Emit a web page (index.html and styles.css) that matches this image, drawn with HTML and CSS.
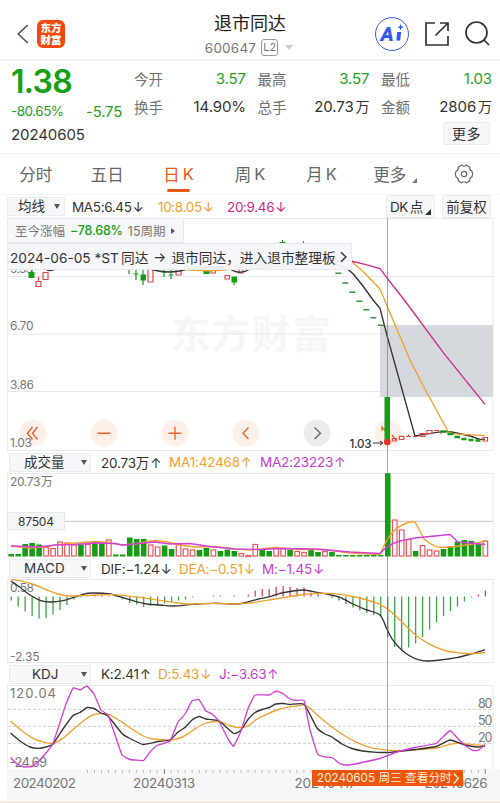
FILE: index.html
```
<!DOCTYPE html>
<html lang="zh-CN">
<head>
<meta charset="utf-8">
<title>退市同达 600647</title>
<link rel="stylesheet" href="styles.css">
</head>
<body>
<header class="topbar">
  <div class="topbar-left">
    <svg class="back" width="12" height="20" viewBox="0 0 12 20"><path d="M10.8 1L1.2 10l9.6 9"/></svg>
    <div class="logo"><span>东方</span><span>财富</span></div>
  </div>
  <div class="title">
    <h1>退市同达</h1>
    <div class="code"><span>600647</span><i class="level">L2</i><i class="caret"></i></div>
  </div>
  <div class="topbar-right">
    <div class="ai"><b>A</b><svg width="8" height="19" viewBox="0 0 8 19"><path d="M1.2 8h3.9l-.9 8.500H.3z"/><path d="M4.600 0l.9 2.3L7.800 3.200l-2.300.9L4.600 6.400l-.9-2.300-2.300-.9 2.300-.9z"/></svg></div>
    <svg class="line-icon" width="24" height="24" viewBox="0 0 24 24"><path d="M10 1H1v22h22v-9M10.500 13.500L22.500 1.500M15 1h8v8"/></svg>
    <svg class="line-icon" width="25" height="25" viewBox="0 0 25 25"><circle cx="11.500" cy="11.500" r="10.500"/><path d="M19 19l5 5"/></svg>
  </div>
</header>

<section class="quote">
  <div class="last">
    <div class="price">1.38</div>
    <div class="change"><span class="pct">-80.65%</span><span class="diff">-5.75</span></div>
    <div class="date">20240605</div>
  </div>
  <dl class="stats">
    <div><dt>今开</dt><dd class="down">3.57</dd></div>
    <div><dt>最高</dt><dd class="down">3.57</dd></div>
    <div><dt>最低</dt><dd class="down">1.03</dd></div>
    <div><dt>换手</dt><dd>14.90%</dd></div>
    <div><dt>总手</dt><dd>20.73<span class="unit">万</span></dd></div>
    <div><dt>金额</dt><dd>2806<span class="unit">万</span></dd></div>
    <button class="more">更多</button>
  </dl>
</section>

<nav class="tabs">
  <a>分时</a><a>五日</a><a class="active">日<span class="k">K</span></a><a>周<span class="k">K</span></a><a>月<span class="k">K</span></a><a class="has-corner">更多<i class="corner"></i></a>
  <a><svg class="gear" width="20" height="20" viewBox="0 0 20 20"><path d="M7.600 1.300Q10 3.200 12.400 1.300L15.600 3.100Q15.300 6.100 18 7.300Q19.300 10 18 12.700Q15.300 13.900 15.600 16.900L12.400 18.700Q10 16.800 7.600 18.700L4.400 16.900Q4.700 13.900 2 12.700Q.7 10 2 7.300Q4.700 6.100 4.400 3.100Z"/><circle cx="10" cy="10" r="2.700"/></svg></a>
</nav>

<main class="charts">
  <div class="legend legend-price">
    <button class="select">均线<i></i></button>
    <span class="c-dark">MA5:6.45<em>↓</em></span><span class="c-orange">10:8.05<em>↓</em></span><span class="c-pink">20:9.46<em>↓</em></span>
    <button class="dk">DK<span>点</span><i></i></button>
    <button class="adj">前复权</button>
  </div>
  <div class="panel">
    <svg class="plot" width="500" height="233" viewBox="0 218 500 233">
      <text class="watermark" x="171" y="348" textLength="160">东方财富</text>
      <path class="grid" d="M7.500 218V450.500H493V218.500H7.500M7.500 276.500H493M7.500 334H493M7.500 391.500H493"/>
      <rect class="gap" x="380" y="325" width="113" height="72"/>
      <g class="axis"><text x="10" y="273" textLength="23">9.53</text><text x="10" y="330" textLength="23.500">6.70</text><text x="10" y="388.500" textLength="24">3.86</text></g>
      <g class="controls">
        <circle cx="33" cy="433" r="13.500"/><circle cx="104" cy="433" r="13.500"/><circle cx="175" cy="433" r="13.500"/><circle cx="246" cy="433" r="13.500"/><circle class="off" cx="317" cy="433" r="13.500"/><circle cx="388" cy="433" r="13.500"/>
        <path d="M32.500 427l-5 6.300 5 6.200M37.500 427l-5 6.300 5 6.200M97.500 433.200h13M168.500 433.200h13M175 426.700v13M248.500 427.500l-5.500 5.700 5.500 5.800M382 431v-4l3.500 4v-4.500M392 435l4 5"/>
        <path class="off" d="M314.500 427.500l6 5.700-6 5.800"/>
      </g>
      <g class="axis"><text x="10" y="446.500" textLength="22">1.03</text></g>
      <path class="dash-green" d="M335.300 273.300h6M342.300 283h6M349.300 292.300h6M356.300 301.300h6M363.300 309.700h6M370.300 317.700h6M377.700 325.300h6"/>
      <path class="ink-green" d="M32 265v9M129 269v5M136 270v10M133.500 274h5M143 270v15M164 269v8M161.500 272h5M171 270v9M168.500 275h5M206 268v4M220 268v3M234 277v8M282.500 240v4M279.500 242.500h6"/>
      <path class="body-green" d="M28.500 275h6M140.500 277.500h5.500M203.500 271h6M231.500 279.500h5.500"/>
      <path class="ink-red" d="M36 281.500h5v5h-5zM38.500 276.500v5M43 272.500h5v7h-5zM148 270v12h5v-12M176 269v6h5v-6M211 268v5h4.500v-5M225 275.500h4.500v3.500h-4.500zM239 269v4h4v-4M273 243.500h6M300.500 243.500h6M303.500 241v3"/>
      <path class="ma-black" d="M44 268Q50 273 57 268M147 268Q170 276 190 268M229 268Q239 276 250 269L330 262 346.700 268.300 353.300 274 363 286 373 300 380 308.300 387.300 336.700 415 436Q426 434 436.700 432.300T456.700 433L470 436 480 439.300H485"/>
      <path class="ma-orange" d="M180 269Q210 273 240 268L351 261 363.300 271.700 380 289 387 306 410 360 423.300 386 449 433.300 463 434.300 485 435.700"/>
      <path class="ma-pink" d="M200 268L351 261 365 264.300 380 268.700 387.300 278.300 404.300 300 443.300 352.700 485 404.300"/>
      <rect class="fill-green" x="384.500" y="397" width="5.500" height="45"/>
      <path class="ink-red" d="M392.300 438.500h4v2.500h-4zM399.300 436.300h4.500v3.200h-4.500zM406 436.500h5M408.500 434.500v2M413 436.500h5M420 433.500h5v3h-5zM427 430.500h5v3.200h-5zM434 430.500h5M441 431v3"/>
      <path class="body-green small" d="M440.500 431.500h6M447.500 434h6M454.500 437h5.500M461.500 439h5M468.500 440h5M475.500 440.500h5"/>
      <path class="ink-red" d="M483 437.500h4.500v3.500h-4.500z"/>
      <text class="low" x="349.500" y="447.500" textLength="22">1.03</text>
      <path class="arrow" d="M373 443h9M380 441l3 2-3 2"/>
      <circle class="dot" cx="387.300" cy="442" r="3.300"/>
    </svg>
    <div class="since">至今涨幅 <b>−78.68%</b> 15周期<i></i></div>
    <div class="notice"><span>2024-06-05 *ST<span class="name">同达</span></span><span class="to">→</span><span>退市同达，进入退市整理板</span><svg width="7" height="12" viewBox="0 0 7 12"><path d="M1 1.200l5 4.800-5 4.800"/></svg></div>
  </div>

  <div class="legend legend-vol">
    <button class="select wide">成交量<i></i></button>
    <span class="c-dark">20.73万<em>↑</em></span><span class="c-orange">MA1:42468<em>↑</em></span><span class="c-violet">MA2:23223<em>↑</em></span>
  </div>
  <svg class="plot" width="500" height="85" viewBox="0 473 500 85">
    <path class="grid" d="M7.500 473V557M493 473V557M7.500 473.500H493"/>
    <path class="cross" d="M65 521.300H493"/>
    <rect class="tag" x="7.500" y="512.500" width="57" height="17"/>
    <text class="tag-text" x="18" y="526" textLength="36">87504</text>
    <g class="axis"><text x="10" y="485.500" textLength="43">20.73<tspan dx="1">万</tspan></text></g>
    <g id="volume"></g>
    <path class="v-orange" d="M11 546L30 548 45 547Q58 544 70 543.500L95 541.500 108 542.500 122 545 135 544 145 542 155 540.500 168 542 180 545 195 547 215 546.500 235 549 250 550 275 547.500 300 549.500 325 549.500 350 553 380 554.500Q386 540 392 533T408 522.500L415 521.700 424 539Q433 547 442 547.500L455 546.500 470 544.500 485 541"/>
    <path class="v-violet" d="M11 546L38 547 55 545 75 544.500 95 543 115 543.500 122 545 140 543.500 155 542 170 544 190 543.500 210 546.500 235 549 260 549.500 280 548.500 315 549 350 552 380 553.500Q387 545 400 541L415 538 450 534.500 458 542 485 544.500"/>
  </svg>

  <div class="legend legend-macd">
    <button class="select wide">MACD<i></i></button>
    <span class="c-dark">DIF:−1.24<em>↓</em></span><span class="c-orange">DEA:−0.51<em>↓</em></span><span class="c-violet">M:−1.45<em>↓</em></span>
  </div>
  <svg class="plot" width="500" height="84" viewBox="0 579 500 84">
    <path class="grid" d="M7.500 579.500H493V662.500H7.500z"/>
    <g class="axis"><text x="10" y="591.500" textLength="24">0.58</text><text x="10" y="660.500" textLength="29.500">-2.35</text></g>
    <g id="macd"></g>
    <path class="ma-black" id="dif"/>
    <path class="ma-orange" id="dea"/>
  </svg>

  <div class="legend legend-kdj">
    <button class="select wide">KDJ<i></i></button>
    <span class="c-dark">K:2.41<em>↑</em></span><span class="c-orange">D:5.43<em>↓</em></span><span class="c-violet">J:−3.63<em>↑</em></span>
  </div>
  <svg class="plot" width="500" height="84" viewBox="0 685 500 84">
    <path class="grid" d="M7.500 769V685.500H493V769"/>
    <path class="dashes" d="M8 709.300H493M8 726.300H493M8 743.300H493"/>
    <g class="axis large"><text x="10" y="698" textLength="46">120.04</text><text x="9.500" y="766.500" textLength="37.500">-24.69</text></g>
    <g class="axis right"><text x="478" y="707.500" textLength="14.500">80</text><text x="478" y="724.500" textLength="14.500">50</text><text x="478" y="741.500" textLength="14.500">20</text></g>
    <path class="ma-orange" id="d-line"/>
    <path class="ma-black" id="k-line"/>
    <path class="v-violet" id="j-line"/>
  </svg>
  <div class="timeline">
    <svg class="ticks" width="493" height="32" viewBox="7 769 493 32">
      <path class="tick-row" d="M87 771.500H485"/>
      <path class="tick-main" d="M164.500 769v5M485.300 769v5"/>
      <g class="dates"><text x="13" y="788" textLength="63">20240202</text><text x="133" y="788" textLength="62">20240313</text><text x="294.500" y="788" textLength="62">20240417</text><text x="424.500" y="788" textLength="63">20240626</text></g>
    </svg>
    <div class="badge">20240605 周三 查看分时<svg width="6" height="11" viewBox="0 0 6 11"><path d="M.8 .5l4.400 5-4.400 5"/></svg></div>
  </div>
  <div class="crosshair"></div>
</main>
<div class="bottom-line"></div>
<script src="chart.js"></script>
</body>
</html>
```
FILE: styles.css
```
* { box-sizing: border-box; }
body {
  margin: 0;
  width: 500px;
  height: 803px;
  overflow: hidden;
  background: #fff;
  color: #333;
  font-family: Inter, "Noto Sans CJK SC", sans-serif;
  font-size: 15px;
}
i, em { font-style: normal; }
button { font: inherit; color: inherit; margin: 0; padding: 0; border: 1px solid #ececf0; background: #f7f7fa; }
svg { display: block; fill: none; }

.topbar { height: 61px; border-bottom: 2px solid #f0f0f0; display: grid; grid-template-columns: 125px 250px 125px; }
.topbar-left { display: flex; align-items: center; padding: 8px 0 0 17px; gap: 8px; }
.back { stroke: #555; stroke-width: 1.7; }
.logo { width: 28px; height: 28px; border-radius: 6px; background: #f5490c; color: #fff; display: flex; flex-direction: column; align-items: center; justify-content: center; font: 900 10.5px/11.5px "Noto Sans CJK SC", sans-serif; }
.title { display: flex; flex-direction: column; align-items: center; padding-top: 13px; }
.title h1 { margin: 0; font-size: 18px; line-height: 22px; font-weight: 400; color: #222; }
.code { display: flex; align-items: center; height: 19px; margin-top: 3px; margin-right: 2px; font-size: 13.500px; color: #777; letter-spacing: .2px; }
.level { border: 1px solid #999; border-radius: 3px; width: 17px; height: 17px; font-size: 11px; line-height: 15px; text-align: center; margin: 0 7px 0 5px; letter-spacing: 0; }
.caret { border: 4.500px solid transparent; border-top: 5px solid #ccc; border-bottom: 0; }
.topbar-right { display: flex; align-items: center; padding-top: 8px; gap: 16px; }
.ai { width: 34px; height: 34px; border: 1.500px solid #3c5ee8; border-radius: 50%; display: flex; align-items: center; justify-content: center; gap: 2px; color: #3159f5; }
.ai b { font: italic 900 20px/20px Roboto, sans-serif; padding-top: 1px; }
.ai svg { fill: #3159f5; }
.line-icon { stroke: #333; stroke-width: 1.700; }

.quote { display: grid; grid-template-columns: 123px 1fr; padding: 4px 8px 0 11px; height: 93px; border-bottom: 1px solid #f5f5f5; }
.price { font-size: 32px; line-height: 33px; font-weight: 600; color: #14a014; letter-spacing: -.7px; }
.change { display: flex; height: 25px; align-items: center; color: #28a028; }
.pct { font-size: 13.500px; width: 75px; letter-spacing: -.5px; }
.diff { font-size: 15px; padding-top: 2px; letter-spacing: -.2px; }
.date { font-size: 15px; line-height: 24px; letter-spacing: -.1px; }
.stats { margin: 0; display: grid; grid-template-columns: 112px 112px 111px; grid-template-rows: 27px 28px 25px; column-gap: 11.500px; }
.stats div { display: flex; justify-content: space-between; align-items: center; }
.stats dt { font-size: 14.500px; color: #707070; }
.stats dd { margin: 0; font-size: 15px; letter-spacing: -.1px; }
.stats .down { color: #28a028; }
.unit { font-size: 14px; margin-left: 2px; }
.more { grid-column: 3; justify-self: end; width: 47px; height: 23px; margin: 2px 2px 0 0; font-size: 14px; line-height: 20px; border-radius: 2px; letter-spacing: .5px; }

.tabs { display: grid; grid-template-columns: repeat(7, 1fr); height: 41px; border-bottom: 1px solid #f5f5f5; }
.tabs a { position: relative; display: flex; justify-content: center; align-items: center; font-size: 16.500px; color: #666; padding-bottom: 1px; }
.k { margin-left: 3px; }
.tabs .active { color: #ea5a12; }
.tabs .active::after { content: ""; position: absolute; bottom: 2px; width: 23px; height: 3.500px; border-radius: 2px; background: #ea5a12; }
.tabs .has-corner { gap: 6px; padding-left: 5px; }
.corner { border-left: 5px solid transparent; border-bottom: 5px solid #777; margin-top: 13px; }
.gear { stroke: #666; stroke-width: 1.200; }

.charts { position: relative; }
.legend { display: grid; align-items: center; font-size: 13.500px; letter-spacing: -.2px; white-space: nowrap; }
.legend em { margin-left: 1px; }
.legend-price { height: 23px; grid-template-columns: 58px 86px 69px 166px 56px 49px; padding-left: 7px; }
.legend-price span { margin-left: 7px; letter-spacing: -.35px; }
.legend-vol, .legend-macd, .legend-kdj { padding-left: 9px; }
.legend-vol { height: 22px; grid-template-columns: 92px 68px 91px 1fr; }
.legend-macd { height: 21px; grid-template-columns: 92px 78px 83px 1fr; }
.legend-kdj { height: 22px; grid-template-columns: 92px 57px 61px 1fr; }
.select { width: 58px; height: 19px; display: flex; align-items: center; justify-content: space-between; padding: 0 4px 0 10px; font-size: 13.500px; line-height: 17px; border-radius: 2px; }
.select.wide { width: 82px; padding: 0 3px 0 14px; }
.legend-kdj .select { padding-left: 22px; }
.select i { border: 3px solid transparent; border-top: 5px solid #555; border-bottom: 0; }
.dk, .adj { height: 23px; width: 49px; font-size: 13.500px; line-height: 20px; border-radius: 2px; }
.dk { display: flex; align-items: center; padding-left: 3px; letter-spacing: -.5px; }
.legend-price .dk span { margin-left: 2px; }
.dk i { border-left: 6px solid transparent; border-bottom: 6px solid #333; margin: 11px 0 0 2px; }
.c-dark { color: #333; }
.c-orange { color: #f0a030; }
.c-pink { color: #d0268c; }
.c-violet { color: #c83ccf; }

.panel { position: relative; }
.since, .notice { position: absolute; left: 7px; background: rgba(246, 247, 250, .95); border: 1px solid #e8e9ec; white-space: nowrap; display: flex; align-items: center; }
.since { top: 0; width: 177px; height: 25px; padding-left: 7px; font-size: 12.500px; color: #777; gap: 5px; }
.since b { color: #14a014; font-weight: 500; letter-spacing: -.2px; }
.since i { border: 3px solid transparent; border-left: 4px solid #555; border-right: 0; }
.notice { top: 25px; width: 345px; height: 27px; padding-left: 2px; font-size: 13.700px; color: #333; }
.notice .name { margin-left: 2px; }
.notice .to { margin: 0 5px; }
.notice svg { stroke: #333; stroke-width: 1.500; margin-left: 4px; }

.grid { stroke: #e9e9ec; }
.gap { fill: #d5d8dd; }
.watermark { font: 700 39px "Noto Sans CJK SC", sans-serif; fill: #f6f6f6; }
.axis { font-size: 12px; fill: #777; }
.axis.right { font-size: 12.500px; }
.axis.large { font-size: 13px; }
.controls circle { fill: #feefe8; }
.controls circle.off { fill: #ececec; }
.controls path { stroke: #e8652c; stroke-width: 1.400; }
.controls path.off { stroke: #666; }
.dash-green { stroke: #2f9a3c; stroke-width: 1.400; }
.ink-green { stroke: #159c15; stroke-width: 1.200; }
.body-green { stroke: #159c15; stroke-width: 6; }
.body-green.small { stroke-width: 2.500; }
.ink-red { stroke: #e04848; stroke-width: 1.200; }
.fill-green { fill: #159c15; }
.fill-red { fill: #fff; stroke: #e8555a; stroke-width: 1.200; }
.ma-black, .ma-orange, .ma-pink, .v-orange, .v-violet { stroke-width: 1.350; stroke-linejoin: round; }
.ma-black { stroke: #333; }
.ma-orange, .v-orange { stroke: #f0a02c; }
.ma-pink { stroke: #cf2a8a; }
.v-violet { stroke: #d240d8; }
.low { font-size: 11.500px; font-weight: 500; fill: #333; }
.arrow { stroke: #333; }
.dot { fill: #ee2f24; }
.cross { stroke: #c4c4c6; }
.tag { fill: #f7f7fa; stroke: #e8e8ec; }
.tag-text { font-size: 12px; fill: #333; }
.macd-down { stroke: #3da24a; stroke-width: 1.300; }
.macd-up { stroke: #d9445c; stroke-width: 1.300; }
.dashes { stroke: #ccc; stroke-dasharray: 3 2; }

.timeline { position: relative; height: 32px; margin-left: 7px; background: #f7f7fa; }
.tick-row { stroke: #bbb; stroke-width: 3; stroke-dasharray: 1 5.980; }
.tick-main { stroke: #888; }
.dates { font-size: 13.500px; fill: #777; }
.badge { position: absolute; z-index: 2; left: 305px; top: 1px; width: 151px; height: 16px; background: #ec560c; color: #ffeedd; font-size: 11.700px; line-height: 16px; padding-left: 5px; white-space: nowrap; display: flex; align-items: center; gap: 1px; }
.badge svg { stroke: #ffeedd; stroke-width: 1.400; }
.crosshair { position: absolute; left: 387px; top: 23px; bottom: 32px; width: 1px; background: rgba(110, 110, 115, .6); }
.bottom-line { height: 2px; background: #fbe6e4; }
```
FILE: chart.js
```
const NS = "http://www.w3.org/2000/svg";
const xAt = i => 11.2 + i * 6.973;

function add(parent, tag, attrs) {
  const el = document.createElementNS(NS, tag);
  for (const k in attrs) el.setAttribute(k, attrs[k]);
  parent.appendChild(el);
}

// Draws a line through "x,y" points; tension 0 keeps straight segments.
function line(id, text, tension) {
  const p = text.split(" ").map(s => s.split(",").map(Number));
  let d = "M" + p[0];
  for (let i = 0; i < p.length - 1; i++) {
    const a = p[i - 1] || p[i], b = p[i], c = p[i + 1], e = p[i + 2] || c;
    d += `C${b[0] + (c[0] - a[0]) * tension} ${b[1] + (c[1] - a[1]) * tension} ${c[0] - (e[0] - b[0]) * tension} ${c[1] - (e[1] - b[1]) * tension} ${c[0]} ${c[1]}`;
  }
  document.getElementById(id).setAttribute("d", d);
}

// Top edge of each volume bar; "r" marks a rising day, "g" a falling one.
const volume = "g554 g554 g544 g543 g544.5 r547 r548 r541.5 r542.5 r544.5 g544.5 r544 g541.5 g542 r539.5 g554.5 g554.5 g537.5 g539 g539 r544.5 r546.5 g545.5 g549 r544 r548.5 r549.5 g550 g548 r549.5 g551 g549.5 g551 r553 r555 r544 g550 g551 r547 r548 g549.7 r551 r552 g550 g552 r551 g552 g555 g555 g555 g555 g555 g555 g555 g473.3 r519.5 r529.5 r539 g551 r545 r549.5 r550.5 g549 g546 g541.5 g540 g541 g544 r540.5".split(" ");
const vol = document.getElementById("volume");
volume.forEach((v, i) => {
  const top = +v.slice(1);
  const up = v[0] === "r";
  const inset = up ? 0.5 : 0;
  add(vol, "rect", {
    class: up ? "fill-red" : "fill-green",
    x: xAt(i) - 2.8 + inset, y: top + inset,
    width: 5.6 - 2 * inset, height: Math.max(556.5 - top - 2 * inset, 1)
  });
});

// Signed MACD bar lengths in pixels; negative values hang below the zero line.
const macd = [-4, -10, -15, -19.5, -22, -21.5, -18, -13.5, -8.5, -3, -1, 2, 2, 1.5, 1, 0.5, -3, -6.5, -8, -10.5, -9, -8.5, -7, -5.5, -4, -3, -1, 0, 0, 1, 1, 0, 1, 0, 2, 6, 7.5, 7.5, 9.5, 10.5, 9.5, 8.5, 9, 4, 3.5, 0, -1.5, -4, -7.5, -11, -14, -16.5, -18.5, -20, -40.5, -50.5, -53, -51, -47, -40.5, -33, -26, -19.5, -14.5, -10, -5, -1, 2, 6];
const bars = document.getElementById("macd");
macd.forEach((m, i) => {
  if (m) add(bars, "path", { class: m > 0 ? "macd-up" : "macd-down", d: `M${xAt(i)} 596.5v${-m}` });
});

line("dif", "11,581 20,587.3 30,595 40,600.3 50,602 63,600.7 73,597.7 83,594.3 92,593 110,594 123,597.7 133,600.7 147,604 160,605 173,606 193,604.3 213,603.3 237,604 250,601.3 260,598.7 270,596.7 280,593.3 293,591 304,590 317,592.3 328,594.3 340,597.3 353,604 365,609.3 380,615 387.3,630 393.3,640.7 401.7,650 410,656 418.3,659.7 426.7,661 440,660 456.7,657.7 470,654.3 485,649.7", 0.14);
line("dea", "11,579.3 23,581.3 35,585 47,590 58,594 70,596 90,595.3 113,594.7 133,596.7 153,599.3 173,602.3 190,604 213,603.3 237,604 250,603 267,600.3 283,597.7 300,595 317,593.3 333,593.7 350,596 367,600 381.7,605.3 393.3,613.7 406.7,626.7 416.7,636 430,644.3 443.3,650 456.7,652.7 470,653.7 485,652.5", 0.16);

line("d-line", "10.5,721 20,729.3 31.7,737.7 41.7,741.7 53.3,743.3 63.3,738 73.3,729.3 83.3,721 91.7,715.3 100,713.7 108.3,714.3 116.7,718.7 130,727.7 143.3,736 153.3,739 166.7,740 173.3,739.7 183.3,736.7 193.3,730 203.3,724 213.3,721.7 220.7,722 230,725.7 238.3,727.7 245,727 250,724.7 256.7,719.3 266.7,714.3 276.7,710 286.7,707.3 296.7,706 304,705 310,708.3 318.3,716 331.7,726.7 345,736 356.7,742.3 370,747.3 383.3,749.7 396.7,750.7 413.3,750 436.7,748 450,744.3 460,743.3 473.3,744.7 485,745.7", 0.16);
line("k-line", "10.5,733 20,741 30,747 38,748.3 46,747 53,744 63,729 73,715.5 80,712.5 87,707.5 94,708.5 101,713 108,716 122,733.5 129,738 143,744.5 158,741.5 170,740 178,732 185,727.5 192,720 199,716.5 206,719 219,721 234,733.5 241,730 248,719.5 255,712.5 262,709.5 269,707.5 276,704 283,703.5 290,704.5 304,704.3 317,728 325,734 332,737 342,744 352,748.5 363,751 377,752.3 390,752.3 415,749.5 436,746.5 450,740 462,744 470,746 478,747 485,746", 0.08);
line("j-line", "10.5,757.5 17,764 24,767 32,766.5 39,761 46,753 53,743.5 66,704 73,688 80,690 87,686 94,694 101,710 108,715 115,735 122,755 130,759.5 143.5,760.5 150,752 157,745.5 170,741 178,722 185,714 192,701 199,699.5 206,711 212,714 219,721 227,737 233.5,746.5 241,731 248,708.5 255,695 269,695 276,691 283,693.5 290,699 296,700.5 304,700.5 310,730 317.5,754 325,757 332,757.5 339,763 345,765 352,764.5 360,763 380,758.5 397,752 415,747.5 436,743.5 450,730.5 460,741 468,747.5 473,750.5 478,750.5 485,744.5", 0.04);
```
